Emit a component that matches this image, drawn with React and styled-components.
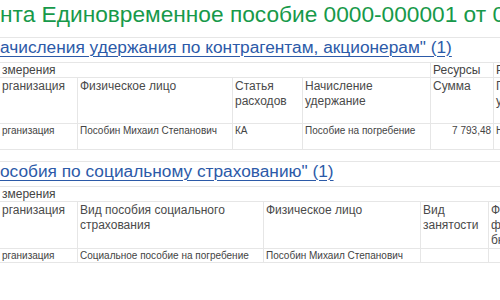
import React from "react";
import styled, { createGlobalStyle } from "styled-components";

const GlobalStyle = createGlobalStyle`
  html, body {
    margin: 0;
    padding: 0;
    background: #ffffff;
  }
  body {
    font-family: "Liberation Sans", Arial, sans-serif;
  }
`;

const Viewport = styled.div`
  width: 500px;
  height: 300px;
  overflow: hidden;
  background: #ffffff;
`;

const Title = styled.h1`
  margin: 0;
  height: 37px;
  padding-top: 1px;
  box-sizing: border-box;
  font-size: 22.7px;
  line-height: 26px;
  font-weight: normal;
  color: #17994a;
  white-space: nowrap;
`;

const Section = styled.section`
  border-top: 1px solid #e6e6e6;
  margin-top: ${(p) => p.$gap || 0}px;
`;

const Heading = styled.a`
  display: block;
  height: 19px;
  margin-bottom: 5px;
  font-size: 17.3px;
  line-height: 19px;
  color: #2c5aa8;
  text-decoration: underline;
  text-underline-offset: 3px;
  text-decoration-thickness: 1px;
  white-space: nowrap;
  cursor: pointer;
`;

const Grid = styled.table`
  border-collapse: separate;
  border-spacing: 0;
  table-layout: fixed;
  width: ${(p) => p.$width}px;
  border-top: 1px solid #e6e6e6;
  color: #4a4a4a;
`;

const Cell = styled.td`
  box-sizing: border-box;
  padding: 0 2px 0 2px;
  vertical-align: top;
  border-bottom: 1px solid #e6e6e6;
  border-right: ${(p) => (p.$open ? "none" : "1px solid #e6e6e6")};
  overflow: hidden;
`;

const GroupCell = styled(Cell)`
  height: 14px;
  font-size: 12px;
  line-height: 14px;
  white-space: nowrap;
  color: #444444;
`;

const HeadCell = styled(Cell)`
  height: 46px;
  padding-top: 1px;
  font-size: 12px;
  line-height: 15px;
  color: #4a4a4a;
`;

const DataCell = styled(Cell)`
  height: ${(p) => p.$h || 13}px;
  font-size: 10px;
  line-height: 13px;
  color: #444444;
  text-align: ${(p) => (p.$num ? "right" : "left")};
  white-space: nowrap;
`;

const accrualCols = [78, 155, 70, 128, 63, 80];
const benefitCols = [78, 186, 157, 68, 90];

const Cols = ({ widths }) => (
  <colgroup>
    {widths.map((w, i) => (
      <col key={i} style={{ width: w }} />
    ))}
  </colgroup>
);

export default function App() {
  const accrualWidth = accrualCols.reduce((a, b) => a + b, 0);
  const benefitWidth = benefitCols.reduce((a, b) => a + b, 0);

  return (
    <>
      <GlobalStyle />
      <Viewport>
        <Title>нта Единовременное пособие 0000-000001 от 0</Title>

        <Section>
          <Heading>ачисления удержания по контрагентам, акционерам" (1)</Heading>
          <Grid $width={accrualWidth}>
            <Cols widths={accrualCols} />
            <tbody>
              <tr>
                <GroupCell colSpan={4}>змерения</GroupCell>
                <GroupCell>Ресурсы</GroupCell>
                <GroupCell>Реквизиты</GroupCell>
              </tr>
              <tr>
                <HeadCell>рганизация</HeadCell>
                <HeadCell>Физическое лицо</HeadCell>
                <HeadCell>Статья расходов</HeadCell>
                <HeadCell>Начисление удержание</HeadCell>
                <HeadCell>Сумма</HeadCell>
                <HeadCell>Подразделение учета</HeadCell>
              </tr>
              <tr>
                <DataCell $h={26}>рганизация</DataCell>
                <DataCell $h={26}>Пособин Михаил Степанович</DataCell>
                <DataCell $h={26}>КА</DataCell>
                <DataCell $h={26}>Пособие на погребение</DataCell>
                <DataCell $h={26} $num>7 793,48</DataCell>
                <DataCell $h={26}>Не облагается</DataCell>
              </tr>
            </tbody>
          </Grid>
        </Section>

        <Section $gap={11}>
          <Heading>особия по социальному страхованию" (1)</Heading>
          <Grid $width={benefitWidth}>
            <Cols widths={benefitCols} />
            <tbody>
              <tr>
                <GroupCell colSpan={5} $open>змерения</GroupCell>
              </tr>
              <tr>
                <HeadCell>рганизация</HeadCell>
                <HeadCell>Вид пособия социального страхования</HeadCell>
                <HeadCell>Физическое лицо</HeadCell>
                <HeadCell>Вид занятости</HeadCell>
                <HeadCell>Финансирование федеральным бюджетом</HeadCell>
              </tr>
              <tr>
                <DataCell>рганизация</DataCell>
                <DataCell>Социальное пособие на погребение</DataCell>
                <DataCell>Пособин Михаил Степанович</DataCell>
                <DataCell></DataCell>
                <DataCell></DataCell>
              </tr>
            </tbody>
          </Grid>
        </Section>
      </Viewport>
    </>
  );
}
